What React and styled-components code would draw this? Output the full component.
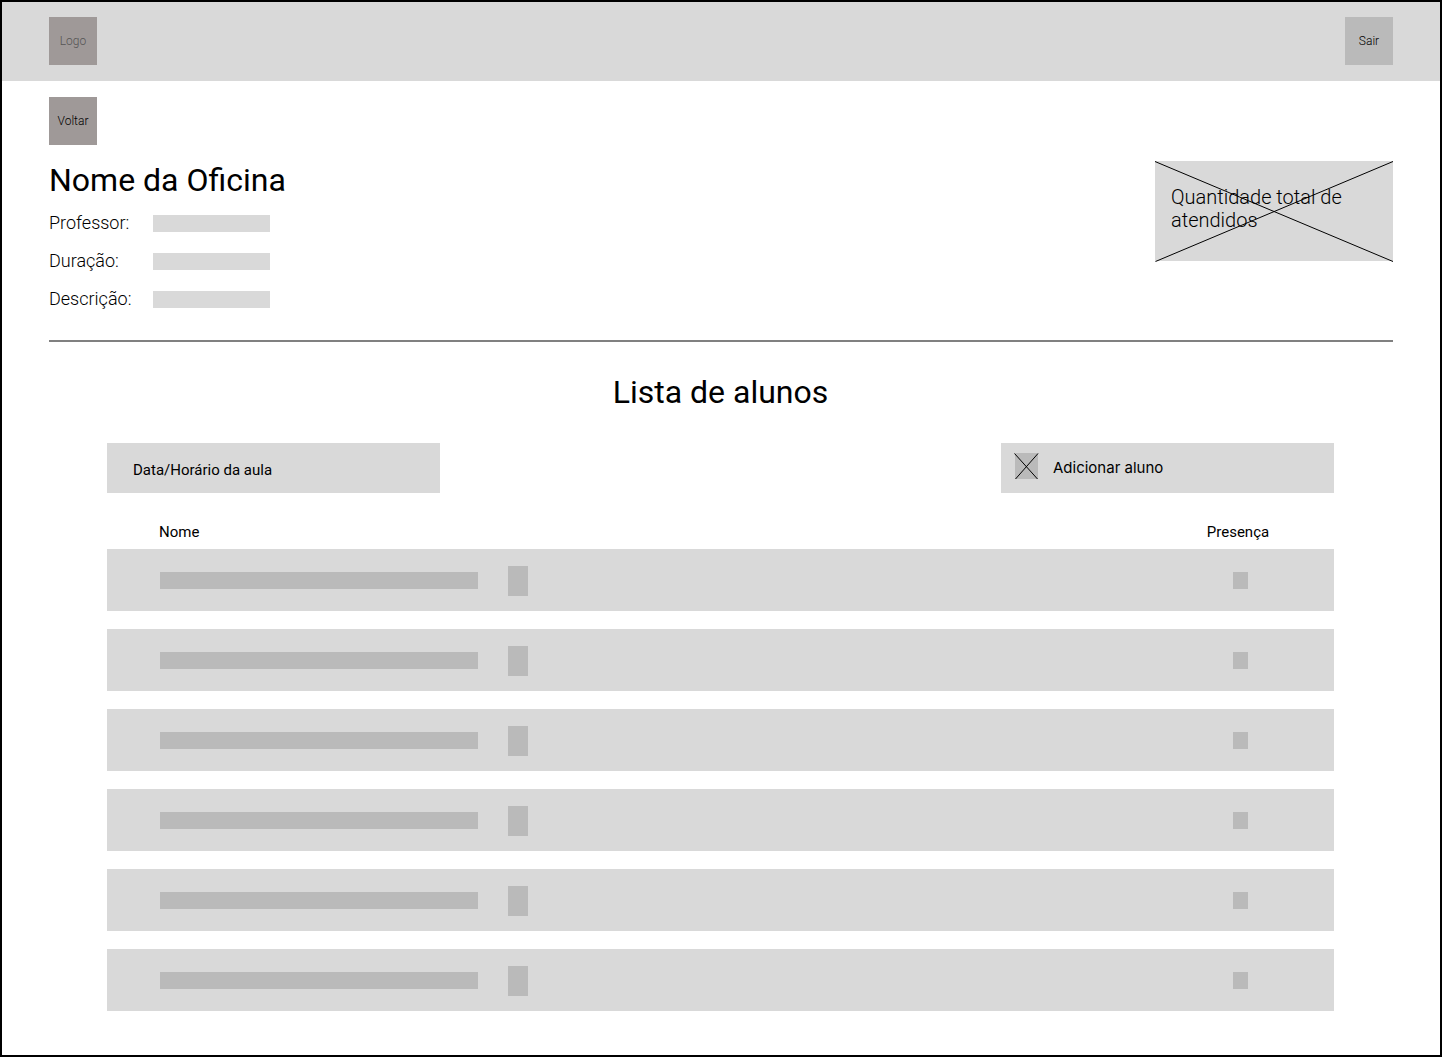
import React from "react";
import styled, { createGlobalStyle } from "styled-components";

const GlobalStyle = createGlobalStyle`
  *, *::before, *::after { box-sizing: border-box; }
  body {
    margin: 0;
    background: #fff;
    color: #000;
    font-family: Roboto, "Liberation Sans", sans-serif;
  }
  button { font: inherit; color: inherit; border: 0; cursor: pointer; }
`;

const Page = styled.div`
  min-height: 100vh;
  border: 2px solid #000;
`;

const TopBar = styled.header`
  display: flex;
  justify-content: space-between;
  padding: 15px 47px 16px;
  background: #d9d9d9;
`;

const Tile = styled.button`
  display: flex;
  align-items: center;
  justify-content: center;
  width: 48px;
  height: 48px;
  padding: 0;
  background: ${(p) => (p.$warm ? "#9f9998" : "#bababa")};
  font-size: 12px;
  line-height: 14px;
  font-weight: 300;
`;

const LogoLink = styled.a`
  display: flex;
  align-items: center;
  justify-content: center;
  width: 48px;
  height: 48px;
  background: #9f9998;
  color: #555;
  font-size: 12px;
  line-height: 14px;
  font-weight: 300;
  text-decoration: none;
`;

const Main = styled.main`
  padding: 16px 47px 44px;
`;

const Workshop = styled.section`
  display: flex;
  justify-content: space-between;
  align-items: flex-start;
  margin-top: 16px;
  padding-bottom: 30px;
  border-bottom: 2px solid #808080;
`;

const Heading = styled.h1`
  margin: 0;
  font-size: 32px;
  line-height: 38px;
  font-weight: 400;
`;

const ListHeading = styled(Heading).attrs({ as: "h2" })`
  text-align: center;
`;

const Details = styled.dl`
  display: grid;
  grid-template-columns: 104px 117px;
  row-gap: 16px;
  align-items: center;
  margin: 13px 0 0;
`;

const Term = styled.dt`
  font-size: 18px;
  line-height: 22px;
  font-weight: 300;
`;

const Value = styled.dd`
  height: 17px;
  margin: 0;
  background: #d9d9d9;
`;

const TotalCard = styled.aside`
  position: relative;
  width: 238px;
  min-height: 100px;
  padding: 25px 16px;
  background: #d9d9d9;
  font-size: 20px;
  line-height: 23px;
  font-weight: 300;
`;

const TotalText = styled.p`
  margin: 0;
`;

const Cross = styled.svg`
  position: absolute;
  inset: 0;
  width: 100%;
  height: 100%;
  overflow: visible;
  stroke: #000;
`;

const Students = styled.section`
  padding: 31px 59px 0 58px;
`;

const Actions = styled.div`
  display: flex;
  justify-content: space-between;
  margin-top: 32px;
`;

const Action = styled.button`
  display: flex;
  align-items: center;
  gap: 15px;
  width: 333px;
  height: 50px;
  padding: ${(p) => (p.$icon ? "0 14px" : "4px 26px 0")};
  background: #d9d9d9;
  font-family: ${(p) => (p.$icon ? "Inter, Roboto, sans-serif" : "inherit")};
  font-size: 15px;
  line-height: 18px;
  text-align: left;
`;

const AddIcon = styled.svg`
  width: 23px;
  height: 26px;
  margin-bottom: 4px;
  overflow: visible;
  background: #bababa;
  stroke: #000;
`;

const Table = styled.table`
  display: block;
  margin-top: 30px;
`;

const Head = styled.thead`
  display: block;
`;

const Body = styled.tbody`
  display: flex;
  flex-direction: column;
  gap: 18px;
  margin-top: 8px;
`;

const HeadRow = styled.tr`
  display: flex;
  justify-content: space-between;
`;

const HeadCell = styled.th`
  padding: 0 4px 0 0;
  font-size: 15px;
  line-height: 18px;
  font-weight: 400;
  ${(p) => (p.$presence ? "width: 188px; text-align: center;" : "padding-left: 52px;")}
`;

const Row = styled.tr`
  display: flex;
  justify-content: space-between;
  height: 62px;
  padding-top: 1px;
  background: #d9d9d9;
`;

const NameCell = styled.td`
  display: flex;
  align-items: center;
  gap: 30px;
  padding: 0 0 0 53px;
`;

const NameBar = styled.span`
  width: 318px;
  height: 17px;
  background: #bababa;
`;

const RowButton = styled.button`
  width: 20px;
  height: 30px;
  padding: 0;
  background: #bababa;
`;

const PresenceCell = styled.td`
  display: flex;
  align-items: center;
  justify-content: center;
  width: 188px;
  padding: 0;
`;

const Check = styled.input`
  appearance: none;
  width: 15px;
  height: 17px;
  margin: 0;
  background: #bababa;

  &:checked { background: #555; }
`;

const details = ["Professor:", "Duração:", "Descrição:"];
const students = [1, 2, 3, 4, 5, 6];

export default function App() {
  return (
    <>
      <GlobalStyle />
      <Page>
        <TopBar>
          <LogoLink href="#">Logo</LogoLink>
          <Tile type="button">Sair</Tile>
        </TopBar>
        <Main>
          <Tile type="button" $warm>Voltar</Tile>
          <Workshop>
            <div>
              <Heading>Nome da Oficina</Heading>
              <Details>
                {details.map((label) => (
                  <React.Fragment key={label}>
                    <Term>{label}</Term>
                    <Value />
                  </React.Fragment>
                ))}
              </Details>
            </div>
            <TotalCard>
              <TotalText>Quantidade total de atendidos</TotalText>
              <Cross viewBox="0 0 238 100" preserveAspectRatio="none" aria-hidden="true">
                <path d="M0 .5 238 100.5M238 .5 .5 100.5" />
              </Cross>
            </TotalCard>
          </Workshop>
          <Students>
            <ListHeading>Lista de alunos</ListHeading>
            <Actions>
              <Action type="button">Data/Horário da aula</Action>
              <Action type="button" $icon>
                <AddIcon viewBox="0 0 23 26" aria-hidden="true">
                  <path d="M-.5 .5 22.5 26M23 .5 .5 26" />
                </AddIcon>
                Adicionar aluno
              </Action>
            </Actions>
            <Table>
              <Head>
                <HeadRow>
                  <HeadCell scope="col">Nome</HeadCell>
                  <HeadCell scope="col" $presence>Presença</HeadCell>
                </HeadRow>
              </Head>
              <Body>
                {students.map((n) => (
                  <Row key={n}>
                    <NameCell>
                      <NameBar />
                      <RowButton type="button" aria-label={`Aluno ${n}`} />
                    </NameCell>
                    <PresenceCell>
                      <Check type="checkbox" aria-label={`Presença ${n}`} />
                    </PresenceCell>
                  </Row>
                ))}
              </Body>
            </Table>
          </Students>
        </Main>
      </Page>
    </>
  );
}
